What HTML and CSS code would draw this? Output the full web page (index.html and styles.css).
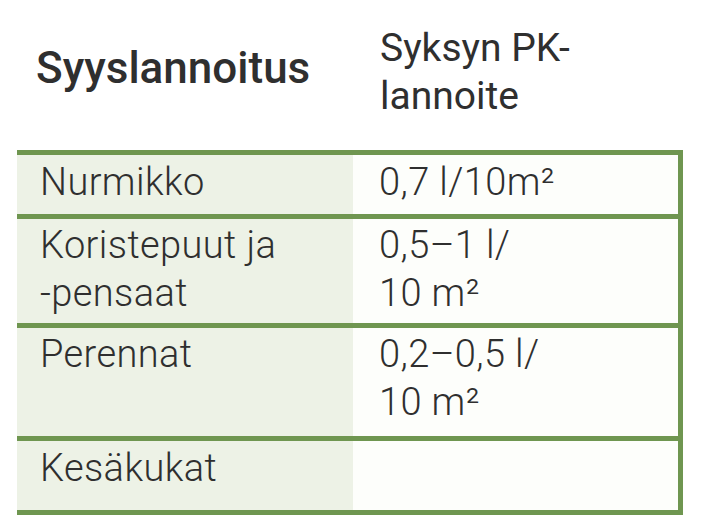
FILE: index.html
```html
<!DOCTYPE html>
<html lang="fi">
<head>
<meta charset="utf-8">
<title>Syyslannoitus</title>
<link rel="stylesheet" href="styles.css">
</head>
<body>
<div class="sheet">
  <div class="head">
    <div class="head-left">Syyslannoitus</div>
    <div class="head-right">Syksyn PK-<br>lannoite</div>
  </div>
  <div class="tbl">
    <div class="row r1">
      <div class="c left">Nurmikko</div>
      <div class="c right">0,7 l/10m²</div>
    </div>
    <div class="row r2">
      <div class="c left">Koristepuut ja<br>-pensaat</div>
      <div class="c right">0,5–1 l/<br>10 m²</div>
    </div>
    <div class="row r3">
      <div class="c left">Perennat</div>
      <div class="c right">0,2–0,5 l/<br>10 m²</div>
    </div>
    <div class="row r4">
      <div class="c left">Kesäkukat</div>
      <div class="c right"></div>
    </div>
  </div>
</div>
</body>
</html>
```

FILE: styles.css
```css
html, body {
  margin: 0;
  padding: 0;
  background: #ffffff;
}

.sheet {
  width: 704px;
  height: 524px;
  padding-left: 17px;
  box-sizing: border-box;
  font-family: Roboto, "Liberation Sans", sans-serif;
  color: #2f2f2f;
}

.head {
  display: grid;
  grid-template-columns: 336px 330px;
  height: 150px;
  box-sizing: border-box;
  padding-top: 24px;
}

.head-left {
  font-size: 44px;
  font-weight: 500;
  line-height: 48px;
  padding-left: 19px;
  padding-top: 20px;
}

.head-right {
  font-size: 39px;
  font-weight: 400;
  line-height: 48px;
  padding-left: 27px;
}

.tbl {
  width: 666px;
  box-sizing: border-box;
  border-right: 5px solid #6f9650;
  border-bottom: 5px solid #6f9650;
}

.row {
  display: grid;
  grid-template-columns: 336px 325px;
  border-top: 5px solid #6f9650;
}

.c {
  font-size: 38px;
  font-weight: 300;
  letter-spacing: 0.4px;
  line-height: 48px;
  padding-top: 3px;
}

.left {
  background: #edf2e6;
  padding-left: 23px;
}

.right {
  background: #fdfefb;
  padding-left: 26px;
}

.r1 .c { padding-bottom: 8px; }
.r2 .c { padding-top: 2px; padding-bottom: 6px; }
.r3 .c { padding-top: 2px; padding-bottom: 10px; }
.r4 .c { padding-bottom: 18px; }
```
